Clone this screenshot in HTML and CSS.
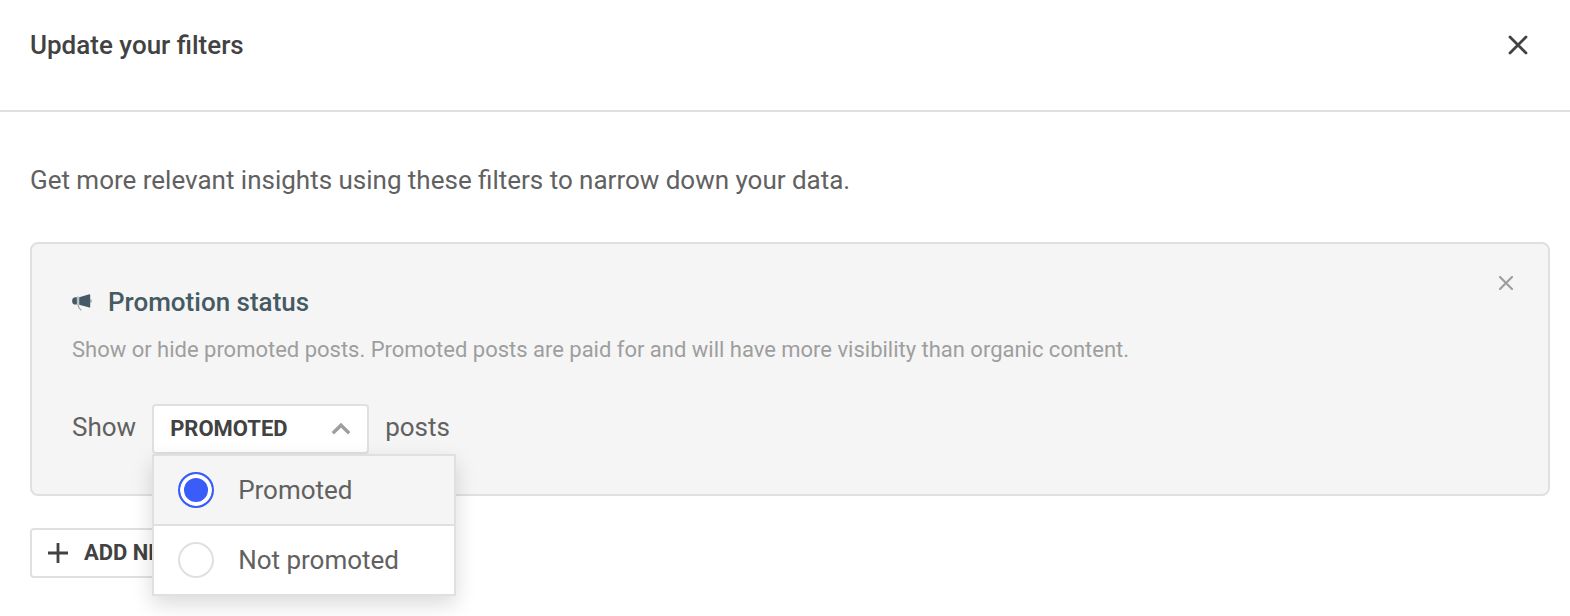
FILE: index.html
```
<!DOCTYPE html>
<html lang="en">
<head>
  <meta charset="UTF-8">
  <title>Update your filters</title>
  <link rel="stylesheet" href="styles.css">
</head>
<body>

  <!-- Header -->
  <header class="modal-header">
    <h1>Update your filters</h1>
    <button class="icon-btn close-modal" aria-label="Close">
      <svg width="20" height="20" viewBox="0 0 20 20"><path d="M2 2L18 18M18 2L2 18"/></svg>
    </button>
  </header>

  <main class="modal-body">
    <p class="intro">Get more relevant insights using these filters to narrow down your data.</p>

    <!-- Filter card -->
    <section class="filter-card">
      <div class="card-content">
        <h2>
          <svg class="megaphone" width="20" height="18" viewBox="0 0 20 18">
            <path d="M4.900 4.200H3.500C1.200 4.200 .1 5.700 .1 7.900S1.200 11.600 3.500 11.600H4.900Z"/>
            <path d="M7.200 4.200L17.400 1.300Q18.200 1.100 18.200 1.900V14Q18.200 14.800 17.400 14.600L7.200 11.700Z"/>
            <path class="mouth" d="M18.200 5.900Q19.900 6.300 19.900 7.900T18.200 10Z"/>
            <path class="handle" d="M6 3.500V12C6.300 14.400 7.500 16 9.300 17.200"/>
          </svg>
          Promotion status
        </h2>
        <p class="description">Show or hide promoted posts. Promoted posts are paid for and will have more visibility than organic content.</p>

        <div class="filter-row">
          <span>Show</span>
          <div class="select">
            <button class="select-btn">
              PROMOTED
              <svg width="20" height="14" viewBox="0 0 20 14"><path d="M1.800 12.200L10 4.200L18.200 12.200"/></svg>
            </button>
            <div class="select-menu">
              <label class="option selected"><span class="radio"></span>Promoted</label>
              <label class="option"><span class="radio"></span>Not promoted</label>
            </div>
          </div>
          <span>posts</span>
        </div>
      </div>
      <button class="icon-btn remove-filter" aria-label="Remove filter">
        <svg width="14" height="14" viewBox="0 0 14 14"><path d="M1 1L13 13M13 1L1 13"/></svg>
      </button>
    </section>

    <button class="add-btn">
      <svg width="20" height="20" viewBox="0 0 20 20"><path d="M10 0V20M0 10H20"/></svg>
      <span>ADD NEW</span>
    </button>
  </main>

</body>
</html>
```
FILE: styles.css
```
* {
  box-sizing: border-box;
}
body {
  font-family: Roboto, "Liberation Sans", sans-serif;
  font-size: 26px;
  line-height: 32px;
  color: #616161;
  background: #fff;
  margin: 0;
  min-height: 100vh;
}
h1, h2, p {
  margin: 0;
}
button {
  font-family: inherit;
  cursor: pointer;
}
svg {
  display: block;
  flex: none;
  fill: none;
}

/* Header */
.modal-header {
  display: flex;
  justify-content: space-between;
  align-items: center;
  height: 112px;
  padding: 0 42px 20px 30px;
  border-bottom: 2px solid #e0e0e0;
}
.modal-header h1 {
  font-size: 26px;
  font-weight: 500;
  color: #424242;
}
.icon-btn {
  padding: 0;
  border: none;
  background: none;
}
.close-modal {
  stroke: #424242;
  stroke-width: 2.8;
  stroke-linecap: round;
}

.modal-body {
  padding: 52px 20px 0 30px;
}
.intro {
  margin-bottom: 46px;
  word-spacing: -0.08px;
}

/* Filter card */
.filter-card {
  display: flex;
  justify-content: space-between;
  align-items: flex-start;
  height: 254px;
  padding: 32px 35px 0 40px;
  margin-bottom: 32px;
  background: #f5f5f5;
  border: 2px solid #e0e0e0;
  border-radius: 8px;
}
.filter-card h2 {
  display: flex;
  align-items: center;
  gap: 16px;
  padding-top: 10px;
  font-size: 26px;
  font-weight: 500;
  color: #455a64;
}
.megaphone {
  fill: #455a64;
}
.megaphone .mouth {
  fill: #90a0a8;
}
.megaphone .handle {
  fill: none;
  stroke: #90a0a8;
  stroke-width: 1.2;
}
.description {
  margin-top: 16px;
  font-size: 22px;
  line-height: 32px;
  letter-spacing: -0.01px;
  color: #9e9e9e;
}
.remove-filter {
  stroke: #9e9e9e;
  stroke-width: 2.2;
  stroke-linecap: round;
}
.filter-row {
  display: flex;
  gap: 16px;
  margin-top: 38px;
  line-height: 46px;
}

/* Dropdown */
.select {
  position: relative;
}
.select-btn {
  display: flex;
  justify-content: space-between;
  align-items: center;
  width: 217px;
  height: 50px;
  padding: 0 16px 2px;
  font-size: 22px;
  font-weight: 700;
  color: #424242;
  background: #fff;
  border: 2px solid #e0e0e0;
  border-radius: 4px;
}
.select-btn svg {
  stroke: #9e9e9e;
  stroke-width: 3.4;
}
.select-menu {
  position: absolute;
  top: 50px;
  left: 0;
  width: 304px;
  background: #fff;
  border: 2px solid #e0e0e0;
  box-shadow: 0 8px 20px rgba(0, 0, 0, 0.15);
}
.option {
  display: flex;
  align-items: center;
  gap: 24px;
  height: 68px;
  padding-left: 24px;
}
.option.selected {
  height: 70px;
  background: #f5f5f5;
  border-bottom: 2px solid #e0e0e0;
}
.radio {
  width: 36px;
  height: 36px;
  background: #fff;
  border: 2px solid #e0e0e0;
  border-radius: 50%;
}
.selected .radio {
  background: #3a5dfa;
  border-color: #3a5dfa;
  box-shadow: inset 0 0 0 4px #fff;
}

/* Add button */
.add-btn {
  display: flex;
  align-items: center;
  gap: 16px;
  height: 50px;
  padding: 0 16px;
  font-size: 22px;
  font-weight: 700;
  color: #424242;
  background: #fff;
  border: 2px solid #e0e0e0;
  border-radius: 4px;
}
.add-btn span {
  padding-bottom: 2px;
}
.add-btn svg {
  stroke: #424242;
  stroke-width: 2.8;
}
```
